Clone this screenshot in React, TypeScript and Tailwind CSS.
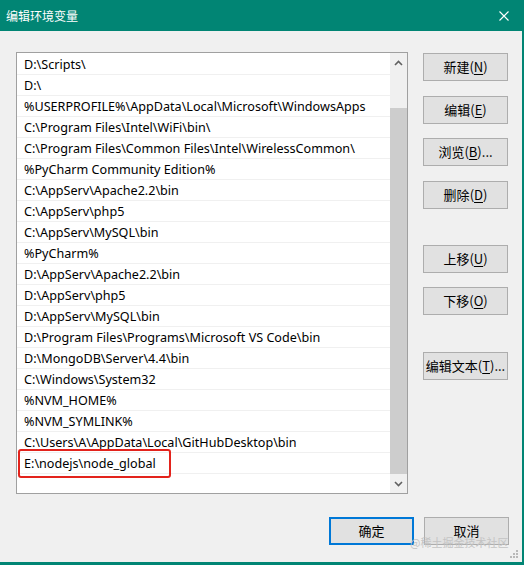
import React from "react";

const rows = [
  "D:\\Scripts\\",
  "D:\\",
  "%USERPROFILE%\\AppData\\Local\\Microsoft\\WindowsApps",
  "C:\\Program Files\\Intel\\WiFi\\bin\\",
  "C:\\Program Files\\Common Files\\Intel\\WirelessCommon\\",
  "%PyCharm Community Edition%",
  "C:\\AppServ\\Apache2.2\\bin",
  "C:\\AppServ\\php5",
  "C:\\AppServ\\MySQL\\bin",
  "%PyCharm%",
  "D:\\AppServ\\Apache2.2\\bin",
  "D:\\AppServ\\php5",
  "D:\\AppServ\\MySQL\\bin",
  "D:\\Program Files\\Programs\\Microsoft VS Code\\bin",
  "D:\\MongoDB\\Server\\4.4\\bin",
  "C:\\Windows\\System32",
  "%NVM_HOME%",
  "%NVM_SYMLINK%",
  "C:\\Users\\A\\AppData\\Local\\GitHubDesktop\\bin",
  "E:\\nodejs\\node_global",
];

function Btn({ label, k, suffix = "", extra = "" }: { label: string; k?: string; suffix?: string; extra?: string }) {
  return (
    <div
      className={`w-[85px] h-[28px] flex items-center justify-center bg-[#e1e1e1] border border-[#adadad] text-[13px] text-black ${extra}`}
    >
      <span>
        {label}
        {k ? (
          <>
            (<span className="underline underline-offset-2">{k}</span>)
          </>
        ) : null}
        {suffix}
      </span>
    </div>
  );
}

export default function App() {
  return (
    <div
      className="relative w-[524px] h-[565px] bg-[#f0f0f0] flex flex-col border-r-2 border-b-[3px] border-[#018574] overflow-hidden"
      style={{ fontFamily: '"Noto Sans", "Noto Sans CJK SC", sans-serif' }}
    >
      {/* Title bar */}
      <div className="h-[31px] bg-[#018574] flex items-center justify-between pl-[6px] pr-[13px] text-white">
        <span className="text-[12px]" style={{ fontFamily: '"Noto Sans CJK SC", sans-serif' }}>
          编辑环境变量
        </span>
        <svg width="10" height="10" viewBox="0 0 10 10" className="mt-[1px]">
          <path d="M0.5 0.5 L9.5 9.5 M9.5 0.5 L0.5 9.5" stroke="white" strokeWidth="1.1" />
        </svg>
      </div>

      <div className="flex flex-col pl-[16px] pt-[21px]">
        <div className="flex">
          {/* List box */}
          <div className="w-[392px] h-[442px] border border-[#a0a0a0] bg-white flex">
            <div className="flex-1 flex flex-col pt-[1px]">
              {rows.map((r, i) => (
                <div
                  key={i}
                  className="relative h-[21px] flex items-center pl-[7px] pt-[2px] border-b border-[#f0f0f0] text-[12.6px] text-black whitespace-nowrap"
                >
                  {r}
                  {i === rows.length - 1 ? (
                    <div className="absolute left-[1px] top-[-4px] w-[153px] h-[29px] border-2 border-[#e3231c] rounded-[3px]" />
                  ) : null}
                </div>
              ))}
            </div>
            {/* Scrollbar */}
            <div className="w-[17px] bg-[#f0f0f0] flex flex-col">
              <div className="h-[20px] flex items-center justify-center">
                <svg width="9" height="6" viewBox="0 0 9 6">
                  <path d="M1 5 L4.5 1.5 L8 5" fill="none" stroke="#606060" strokeWidth="1.6" />
                </svg>
              </div>
              <div className="h-[35px]" />
              <div className="h-[366px] bg-[#cdcdcd]" />
              <div className="flex-1 flex items-center justify-center">
                <svg width="9" height="6" viewBox="0 0 9 6">
                  <path d="M1 1 L4.5 4.5 L8 1" fill="none" stroke="#606060" strokeWidth="1.6" />
                </svg>
              </div>
            </div>
          </div>

          {/* Right buttons */}
          <div className="ml-[15px] pt-[1px] flex flex-col" style={{ fontFamily: '"Noto Sans CJK SC", sans-serif' }}>
            <Btn label="新建" k="N" />
            <Btn label="编辑" k="E" extra="mt-[15px]" />
            <Btn label="浏览" k="B" suffix="..." extra="mt-[14px]" />
            <Btn label="删除" k="D" extra="mt-[15px]" />
            <Btn label="上移" k="U" extra="mt-[36px]" />
            <Btn label="下移" k="O" extra="mt-[14px]" />
            <Btn label="编辑文本" k="T" suffix="..." extra="mt-[37px]" />
          </div>
        </div>

        {/* Bottom buttons */}
        <div className="flex justify-end gap-[10px] mt-[23px] pr-[13px]" style={{ fontFamily: '"Noto Sans CJK SC", sans-serif' }}>
          <div className="w-[85px] h-[28px] flex items-center justify-center bg-[#e1e1e1] border-2 border-[#0078d7] text-[13px] text-black">
            确定
          </div>
          <Btn label="取消" />
        </div>
      </div>

      {/* Watermark */}
      <div
        className="absolute left-[410px] top-[535px] text-[11px] leading-[14px] text-[#c4c4c4] whitespace-nowrap"
        style={{ fontFamily: '"Noto Sans CJK SC", sans-serif' }}
      >
        @稀土掘金技术社区
      </div>

      {/* Resize grip */}
      <svg className="absolute right-[3px] bottom-[3px]" width="9" height="9" viewBox="0 0 9 9">
        <rect x="6" y="0" width="2" height="2" fill="#b8b8b8" />
        <rect x="3" y="3" width="2" height="2" fill="#b8b8b8" />
        <rect x="6" y="3" width="2" height="2" fill="#b8b8b8" />
        <rect x="0" y="6" width="2" height="2" fill="#b8b8b8" />
        <rect x="3" y="6" width="2" height="2" fill="#b8b8b8" />
        <rect x="6" y="6" width="2" height="2" fill="#b8b8b8" />
      </svg>
    </div>
  );
}
